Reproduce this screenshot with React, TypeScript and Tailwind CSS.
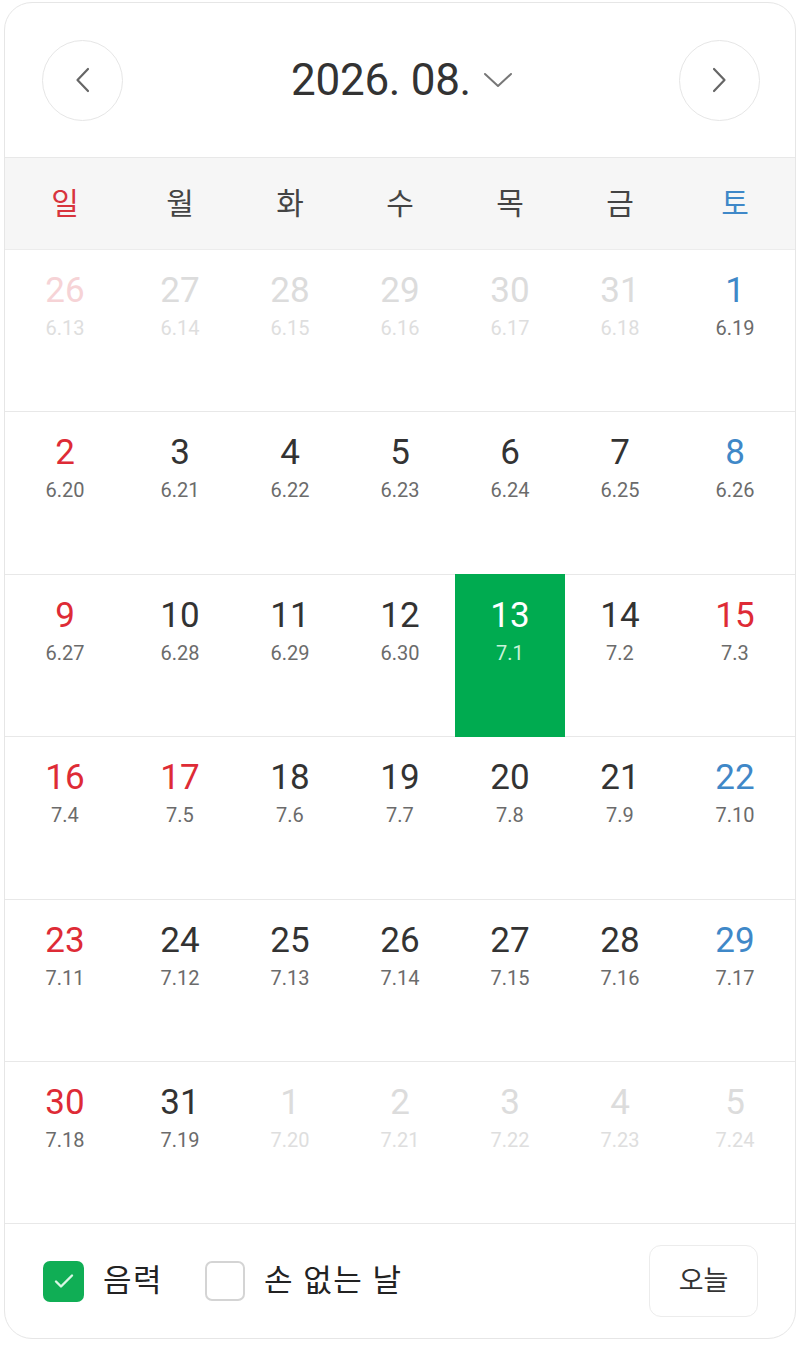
import { useMemo } from 'react'

type Tone = 'sun' | 'sat' | 'normal'

interface Day {
  day: number
  lunar: string
  tone: Tone
  muted?: boolean
  selected?: boolean
}

const WEEKDAYS: { label: string; tone: Tone }[] = [
  { label: '일', tone: 'sun' },
  { label: '월', tone: 'normal' },
  { label: '화', tone: 'normal' },
  { label: '수', tone: 'normal' },
  { label: '목', tone: 'normal' },
  { label: '금', tone: 'normal' },
  { label: '토', tone: 'sat' },
]

// 15, 17 are holidays (광복절 / 대체공휴일)
const HOLIDAYS = [15, 17]

function buildWeeks(): Day[][] {
  const cells: Day[] = []
  // leading days from July
  for (let d = 26; d <= 31; d++) {
    cells.push({ day: d, lunar: `6.${d - 13}`, tone: 'normal', muted: true })
  }
  for (let d = 1; d <= 31; d++) {
    let lunar: string
    if (d <= 12) lunar = `6.${d + 18}`
    else lunar = `7.${d - 12}`
    cells.push({ day: d, lunar, tone: 'normal', selected: d === 13 })
  }
  for (let d = 1; d <= 5; d++) {
    cells.push({ day: d, lunar: `7.${d + 19}`, tone: 'normal', muted: true })
  }
  cells.forEach((c, i) => {
    const col = i % 7
    if (col === 0) c.tone = 'sun'
    else if (col === 6) c.tone = 'sat'
    if (!c.muted && HOLIDAYS.includes(c.day)) c.tone = 'sun'
  })
  const weeks: Day[][] = []
  for (let i = 0; i < cells.length; i += 7) weeks.push(cells.slice(i, i + 7))
  return weeks
}

function dayColor(d: Day) {
  if (d.selected) return 'text-white'
  if (d.muted) return d.tone === 'sun' ? 'text-[#f6d3d6]' : 'text-[#dcdcdc]'
  if (d.tone === 'sun') return 'text-[#de2b36]'
  if (d.tone === 'sat') return 'text-[#3f88c8]'
  return 'text-[#333333]'
}

function lunarColor(d: Day) {
  if (d.selected) return 'text-[#c9f3da]'
  if (d.muted) return 'text-[#dedede]'
  return 'text-[#6b6b6b]'
}

function ChevronLeft() {
  return (
    <svg width="28" height="28" viewBox="0 0 28 28" fill="none" stroke="#666" strokeWidth="2.2" strokeLinecap="round" strokeLinejoin="round">
      <path d="M19 3 8.5 14 19 25" />
    </svg>
  )
}

function ChevronRight() {
  return (
    <svg width="28" height="28" viewBox="0 0 28 28" fill="none" stroke="#666" strokeWidth="2.2" strokeLinecap="round" strokeLinejoin="round">
      <path d="M9 3 19.5 14 9 25" />
    </svg>
  )
}

export default function App() {
  const weeks = useMemo(() => buildWeeks(), [])
  const font = { fontFamily: 'Roboto, "Noto Sans CJK KR", sans-serif' }

  return (
    <div className="w-[800px] bg-white px-[4px] pt-[2px] pb-[10px]" style={font}>
      <div className="flex w-[792px] flex-col overflow-hidden rounded-[28px] border border-[#e6e6e6] bg-white">
        {/* Header */}
        <div className="flex h-[155px] items-center justify-between border-b border-[#e8e8e8] pl-[37px] pr-[35px]">
          <button className="flex size-[81px] items-center justify-center rounded-full border border-[#e6e6e6] bg-white">
            <ChevronLeft />
          </button>
          <div className="flex items-center gap-[12px] pl-[2px]">
            <span className="text-[44px] leading-none tracking-[-0.3px] text-[#333333]">2026. 08.</span>
            <svg width="30" height="18" viewBox="0 0 30 18" fill="none" stroke="#777" strokeWidth="2" strokeLinecap="round" strokeLinejoin="round">
              <path d="M2 3l13 12L28 3" />
            </svg>
          </div>
          <button className="flex size-[81px] items-center justify-center rounded-full border border-[#e6e6e6] bg-white">
            <ChevronRight />
          </button>
        </div>

        {/* Weekdays */}
        <div className="grid h-[92px] grid-cols-[120px_repeat(5,1fr)_120px] items-center border-b border-[#ececec] bg-[#f6f6f6]">
          {WEEKDAYS.map((w) => (
            <div
              key={w.label}
              className={`text-center text-[30px] ${
                w.tone === 'sun' ? 'text-[#d8343d]' : w.tone === 'sat' ? 'text-[#3f88c8]' : 'text-[#444444]'
              }`}
            >
              {w.label}
            </div>
          ))}
        </div>

        {/* Weeks */}
        {weeks.map((week, wi) => (
          <div
            key={wi}
            className="grid h-[162.4px] grid-cols-[120px_repeat(5,1fr)_120px] border-b border-[#e8e8e8]"
          >
            {week.map((d, di) => (
              <div
                key={di}
                className={`flex flex-col items-center pt-[19px] ${d.selected ? '-mt-px -mb-px bg-[#00ab50] pt-[20px]' : ''}`}
              >
                <span className={`text-[35px] leading-[44px] ${dayColor(d)}`}>{d.day}</span>
                <span className={`mt-[2px] text-[20px] leading-[26px] ${lunarColor(d)}`}>{d.lunar}</span>
              </div>
            ))}
          </div>
        ))}

        {/* Footer */}
        <div className="flex h-[114px] items-center justify-between pl-[38px] pr-[37px]">
          <div className="flex items-center">
            <span className="flex size-[41px] items-center justify-center rounded-[7px] bg-[#10ae55]">
              <svg width="24" height="24" viewBox="0 0 24 24" fill="none" stroke="#d9f7e5" strokeWidth="2.4" strokeLinecap="round" strokeLinejoin="round">
                <path d="M4 12.5l5 5L20 6.5" />
              </svg>
            </span>
            <span className="ml-[19px] text-[31px] tracking-[1.5px] text-[#222222]">음력</span>
            <span className="ml-[42px] size-[40px] rounded-[7px] border-2 border-[#d4d4d4] bg-white" />
            <span className="ml-[19px] text-[31px] tracking-[1.5px] text-[#222222]">손 없는 날</span>
          </div>
          <button className="flex h-[72px] w-[109px] items-center justify-center rounded-[12px] border border-[#ececec] bg-white text-[27px] text-[#333333]">
            오늘
          </button>
        </div>
      </div>
    </div>
  )
}
